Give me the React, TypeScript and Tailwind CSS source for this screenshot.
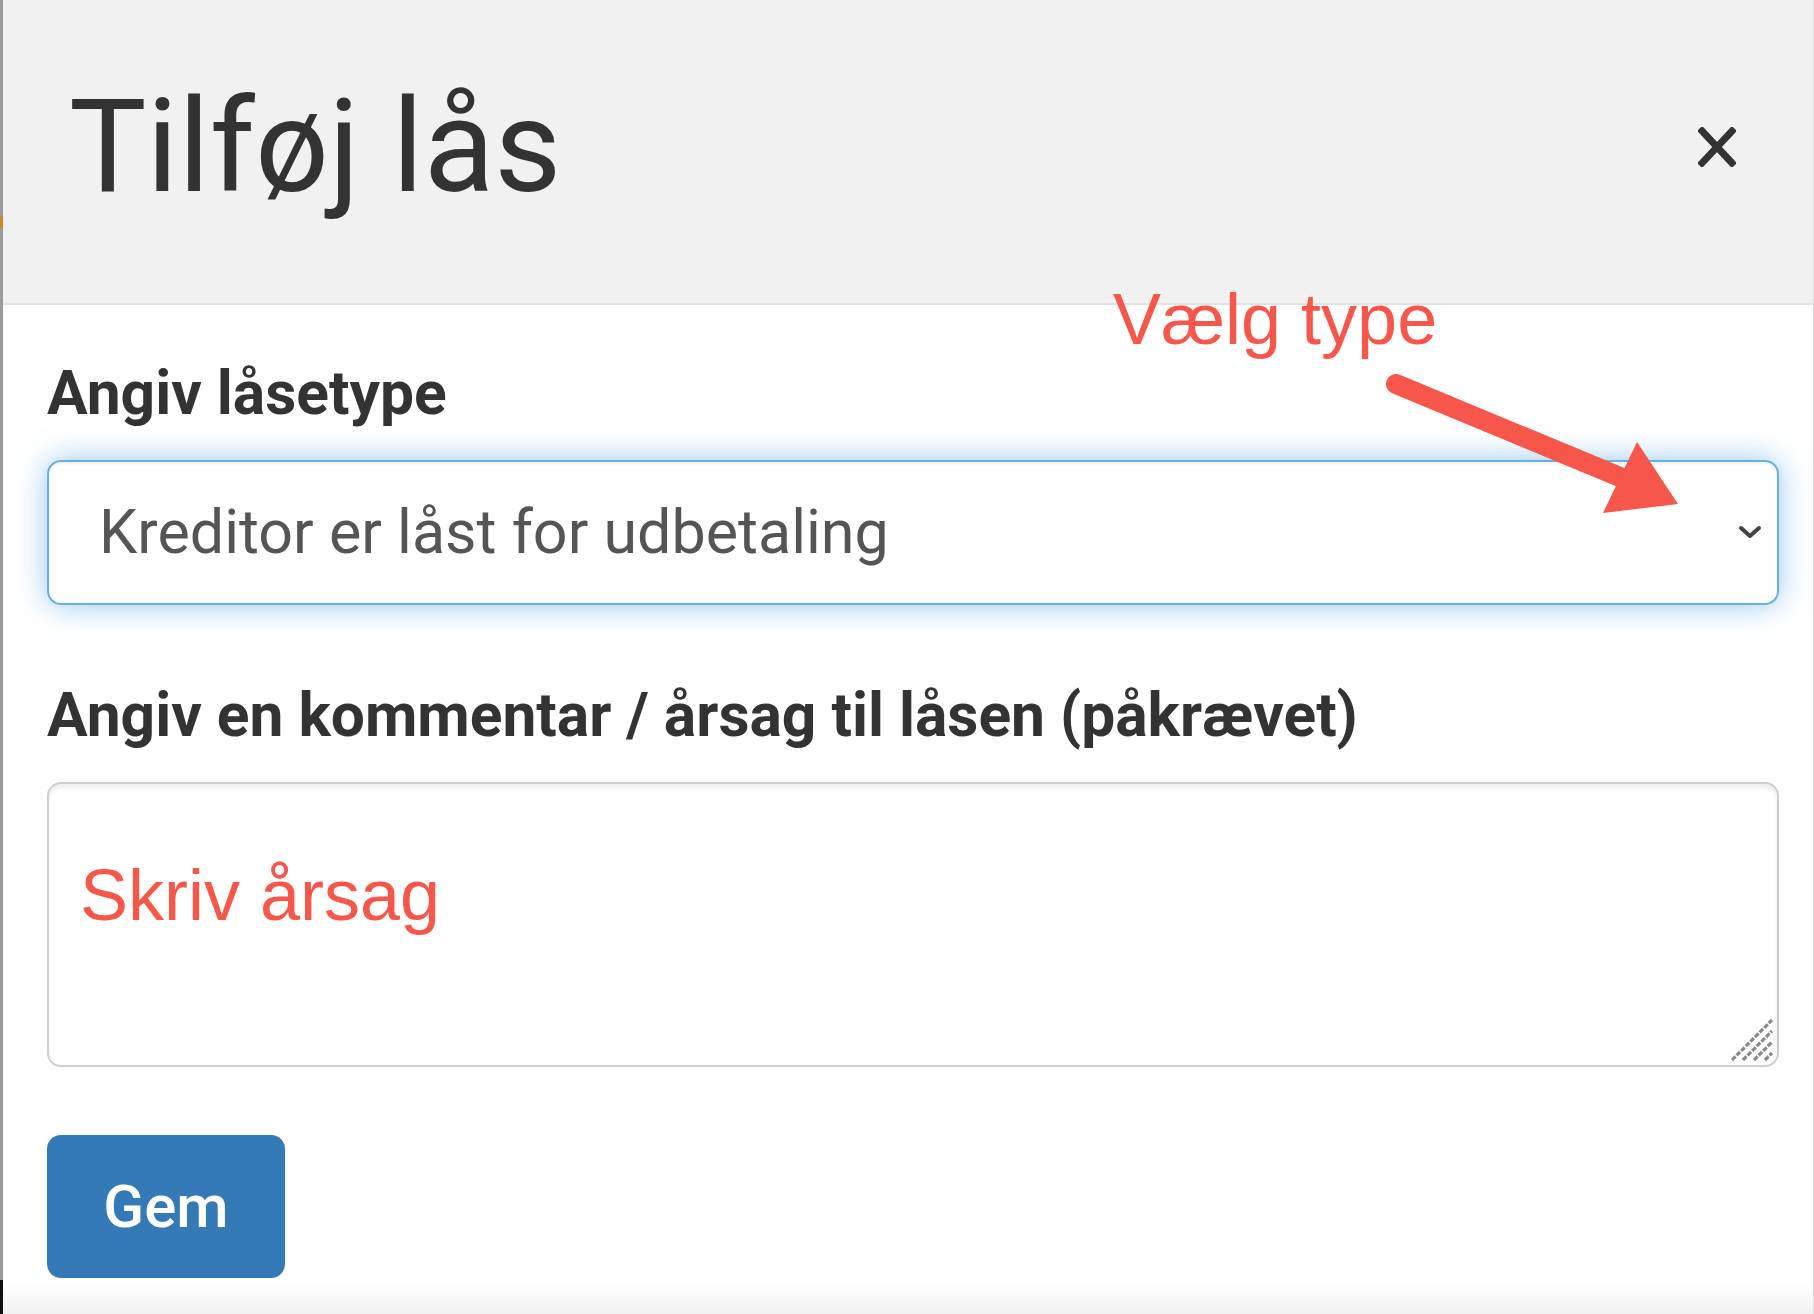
import React from 'react';

const CloseIcon: React.FC = () => (
  <svg width="38" height="40" viewBox="0 0 38 40" fill="none">
    <path d="M4 4 L34 36 M34 4 L4 36" stroke="#333" strokeWidth="7" strokeLinecap="square" />
  </svg>
);

const Chevron: React.FC = () => (
  <svg width="24" height="14" viewBox="0 0 24 14" fill="none">
    <path d="M3 3 L12 11 L21 3" stroke="#444" strokeWidth="4" strokeLinecap="round" strokeLinejoin="round" />
  </svg>
);

const Grip: React.FC = () => (
  <svg width="46" height="46" viewBox="0 0 46 46" fill="none">
    <path d="M4 44 L44 4 M15 44 L44 15 M26 44 L44 26 M37 44 L44 37" stroke="#8a8a8a" strokeWidth="3.2" strokeDasharray="5 1.5" />
  </svg>
);

// red annotation arrow pointing at the select's chevron
const Arrow: React.FC = () => (
  <svg width="320" height="160" viewBox="0 0 320 160" fill="none">
    <path d="M16 14 L240 107" stroke="#f7564a" strokeWidth="20" strokeLinecap="round" />
    <polygon points="257,72 223,143 298,134" fill="#f7564a" />
  </svg>
);

const App: React.FC = () => {
  return (
    <div className="relative w-[1814px] h-[1314px] flex bg-white overflow-hidden font-['Roboto',sans-serif]">
      <div className="w-[3px] shrink-0 bg-[#9b9b9b] flex flex-col">
        <div className="h-[216px]" />
        <div className="h-[12px] bg-[#c98a2a]" />
        <div className="flex-1" />
        <div className="h-[34px] bg-[#111]" />
      </div>

      <div className="flex-1 flex flex-col">
        <div className="h-[305px] shrink-0 bg-[#f1f1f1] border-b-2 border-[#e2e2e2] flex items-start justify-between pl-[66px] pr-[77px] pt-[82px]">
          <h2 className="text-[130px] leading-none font-normal text-[#333]">Tilføj lås</h2>
          <button className="mt-[45px]">
            <CloseIcon />
          </button>
        </div>

        <div className="flex-1 flex flex-col pl-[44px] pr-[34px] pt-[59px]">
          <label className="text-[60.5px] leading-none font-bold text-[#333] mb-[35px]">Angiv låsetype</label>
          <div className="h-[145px] rounded-[14px] border-2 border-[#66afe9] shadow-[0_0_30px_rgba(102,175,233,0.7),inset_0_2px_3px_rgba(0,0,0,0.06)] flex items-center justify-between pl-[50px] pr-[15px]">
            <span className="text-[61px] leading-none text-[#555]">Kreditor er låst for udbetaling</span>
            <Chevron />
          </div>

          <label className="text-[60.5px] leading-none font-bold text-[#333] mt-[81px] mb-[36px]">
            Angiv en kommentar / årsag til låsen (påkrævet)
          </label>
          <div className="relative h-[285px] rounded-[14px] border-2 border-[#cfcfcf] shadow-[inset_0_4px_4px_rgba(0,0,0,0.07)] pl-[31px] pt-[75px]">
            <span className="text-[72px] leading-none text-[#f7564a] font-['Liberation_Sans',Arial,sans-serif]">Skriv årsag</span>
            <div className="absolute right-[3px] bottom-[3px]">
              <Grip />
            </div>
          </div>

          <button className="mt-[68px] h-[143px] w-[238px] rounded-[14px] bg-[#337ab7] text-white text-[60px] leading-none font-medium">
            Gem
          </button>
          <div className="mt-auto h-[30px] -ml-[44px] -mr-[34px] bg-gradient-to-b from-white to-[#f2f2f2]" />
        </div>
      </div>
      <div className="w-px shrink-0 bg-[#dcdcdc]" />

      <span className="absolute left-[1113px] top-[283px] text-[72px] leading-none text-[#f7564a] font-['Liberation_Sans',Arial,sans-serif]">
        Vælg type
      </span>
      <div className="absolute left-[1380px] top-[370px]">
        <Arrow />
      </div>
    </div>
  );
};

export default App;
